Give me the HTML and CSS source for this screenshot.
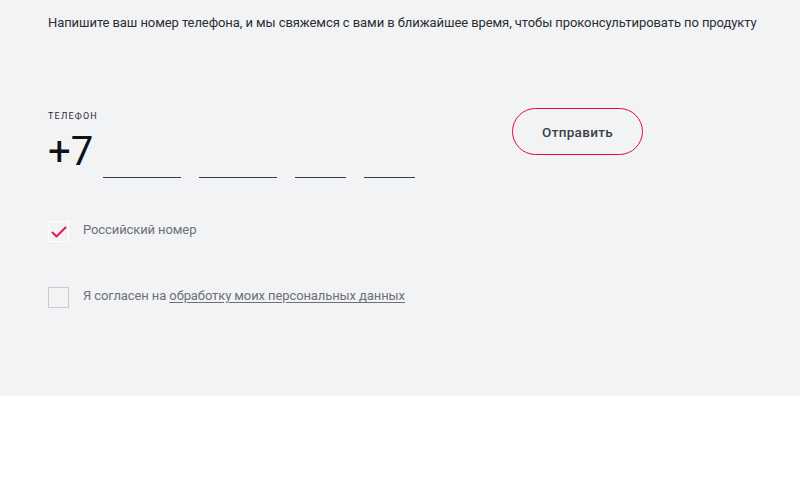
FILE: index.html
```html
<!DOCTYPE html>
<html lang="ru">
<head>
<meta charset="utf-8">
<link rel="stylesheet" href="styles.css">
</head>
<body>
<section class="form">
  <p class="intro">Напишите ваш номер телефона, и мы свяжемся с вами в ближайшее время, чтобы проконсультировать по продукту</p>
  <div class="row">
    <div class="phone">
      <div class="label">Телефон</div>
      <div class="number">
        <span class="prefix">+7</span>
        <span class="seg s3"></span>
        <span class="seg s3"></span>
        <span class="seg s2"></span>
        <span class="seg s2"></span>
      </div>
    </div>
    <button class="send">Отправить</button>
  </div>
  <label class="check first">
    <span class="box checked">
      <svg width="16" height="12" viewBox="0 0 16 12"><path d="M1.5 6.5 L5.5 10.5 L14.5 1.5" fill="none" stroke="#e8174a" stroke-width="2" stroke-linecap="round" stroke-linejoin="round"/></svg>
    </span>
    <span class="text">Российский номер</span>
  </label>
  <label class="check second">
    <span class="box"></span>
    <span class="text">Я согласен на <a href="#">обработку моих персональных данных</a></span>
  </label>
</section>
</body>
</html>
```
FILE: styles.css
```css
* { box-sizing: border-box; }
body {
  margin: 0;
  background: #ffffff;
  font-family: Roboto, "Liberation Sans", sans-serif;
}
.form {
  background: #f2f3f5;
  height: 396px;
  padding: 14px 48px 0;
}
.intro {
  margin: 0;
  font-size: 13px;
  line-height: 18px;
  color: #2b2d33;
  white-space: nowrap;
  letter-spacing: -0.08px;
}
.row {
  display: flex;
  align-items: flex-start;
  margin-top: 76px;
}
.phone { width: 464px; }
.label {
  font-size: 9px;
  letter-spacing: 1.2px;
  text-transform: uppercase;
  color: #2b2d33;
  line-height: 12px;
  margin-top: 2px;
}
.number {
  display: flex;
  align-items: flex-end;
  margin-top: 7px;
  height: 49px;
}
.prefix {
  font-size: 40px;
  font-weight: 400;
  line-height: 40px;
  color: #101114;
  margin-right: 10px;
  margin-bottom: 6px;
}
.seg {
  height: 1.5px;
  background: #3a3d44;
  margin-right: 18px;
}
.s3 { width: 78px; }
.s2 { width: 51px; }
.send {
  width: 131px;
  height: 47px;
  border: 1px solid #e4093f;
  border-radius: 24px;
  background: transparent;
  font-family: inherit;
  font-size: 13.5px;
  font-weight: 500;
  letter-spacing: 0.3px;
  color: #3b3e45;
  cursor: pointer;
}
.check {
  display: flex;
  align-items: center;
  gap: 14px;
}
.check.first { margin-top: 43px; }
.check.second { margin-top: 45px; }
.box {
  width: 21px;
  height: 21px;
  border: 1px solid #c9cacd;
  display: flex;
  align-items: center;
  justify-content: center;
}
.box.checked {
  border: 1px solid #ffffff;
}
.text {
  font-size: 13px;
  color: #6d7078;
  line-height: 18px;
  margin-top: -3px;
  letter-spacing: -0.1px;
}
.text a {
  color: #6d7078;
  text-decoration: underline;
  text-underline-offset: 2px;
}
```
